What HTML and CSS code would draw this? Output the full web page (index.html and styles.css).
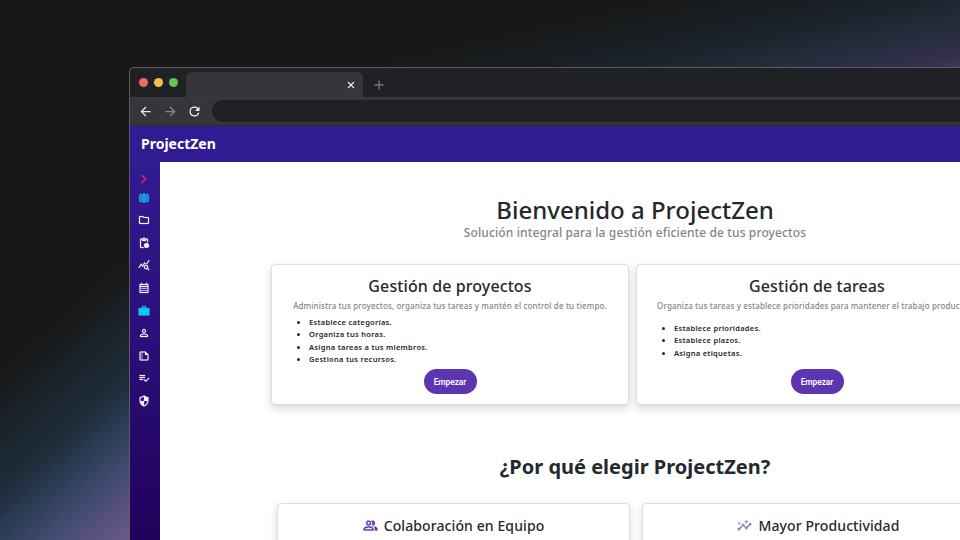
FILE: index.html
```html
<!DOCTYPE html>
<html lang="es">
<head>
<meta charset="utf-8">
<title>ProjectZen</title>
<link rel="stylesheet" href="styles.css">
</head>
<body>
<div class="window">
  <div class="tabs">
    <div class="lights"><i class="red"></i><i class="amber"></i><i class="green"></i></div>
    <div class="tab"><svg viewBox="0 0 8 8"><path d="M1 1l6 6M7 1L1 7"/></svg></div>
    <svg class="plus" viewBox="0 0 10 10"><path d="M5 .5v9M.5 5h9"/></svg>
  </div>
  <div class="toolbar">
    <svg class="nav" viewBox="0 0 24 24"><path d="M20 11H7.83l5.59-5.59L12 4l-8 8 8 8 1.41-1.41L7.83 13H20z"/></svg>
    <svg class="nav dim" viewBox="0 0 24 24"><path d="M12 4l-1.41 1.41L16.17 11H4v2h12.17l-5.58 5.59L12 20l8-8z"/></svg>
    <svg class="nav" viewBox="0 0 24 24"><path d="M17.65 6.35A7.96 7.96 0 0 0 12 4a8 8 0 1 0 7.73 10h-2.08A6 6 0 1 1 12 6c1.66 0 3.14.69 4.22 1.78L13 11h7V4z"/></svg>
    <div class="address"></div>
  </div>
  <header class="header">ProjectZen</header>
  <div class="body">
    <nav class="side">
      <svg class="chevron" viewBox="0 0 24 24"><path d="M7 4l8 8-8 8"/></svg>
      <svg class="cyan-line" viewBox="0 0 24 24"><path d="M12 2l3 3.3 4.7-1.2L20.700 9 22 12l-1.300 3-1 4.900L15 18.700 12 22l-3-3.300-4.700 1.200L3.300 15 2 12l1.300-3 1-4.900L9 5.300z"/><circle cx="12" cy="12" r="3.200"/><path d="M12 4v5M12 15v5M5 8l4.500 2.500M14.500 13.500L19 16M5 16l4.500-2.500M14.500 10.500L19 8"/></svg>
      <svg viewBox="0 0 24 24"><path d="M9.170 6l2 2H20v10H4V6h5.170M10 4H4c-1.100 0-1.990.9-1.990 2L2 18c0 1.100.9 2 2 2h16c1.100 0 2-.9 2-2V8c0-1.100-.9-2-2-2h-8l-2-2z"/></svg>
      <svg viewBox="0 0 24 24"><path d="M17 12a5 5 0 1 0 0 10 5 5 0 0 0 0-10zM18 3h-3.180C14.400 1.840 13.300 1 12 1s-2.400.84-2.820 2H6c-1.100 0-2 .9-2 2v15c0 1.100.9 2 2 2h6.110a6.740 6.740 0 0 1-1.420-2H6V5h2v3h8V5h2v5.080c.71.1 1.380.31 2 .6V5c0-1.100-.9-2-2-2zm-6 2a1 1 0 1 1 0-2 1 1 0 0 1 0 2z"/></svg>
      <svg viewBox="0 0 24 24"><path d="M19.880 18.470c.44-.7.7-1.510.7-2.390 0-2.490-2.010-4.500-4.500-4.500s-4.500 2.010-4.500 4.500 2.010 4.500 4.490 4.500c.88 0 1.700-.26 2.390-.7L21.580 23 23 21.580l-3.120-3.110zm-3.800.11a2.500 2.500 0 1 1 0-5 2.500 2.500 0 0 1 0 5zm-.36-8.500c-.74.020-1.450.18-2.100.45l-.55-.83-3.800 6.180-3.010-3.520-3.630 5.810L1 17l5-8 3 3.500L13 6l2.720 4.080zm2.590.5c-.64-.28-1.330-.45-2.050-.49L21.380 2 23 3.180l-4.690 7.400z"/></svg>
      <svg viewBox="0 0 24 24"><path d="M19 4h-1V2h-2v2H8V2H6v2H5c-1.110 0-1.990.9-1.990 2L3 20a2 2 0 0 0 2 2h14c1.100 0 2-.9 2-2V6c0-1.100-.9-2-2-2zm0 16H5V10h14v10zm0-12H5V6h14v2zM9 14H7v-2h2v2zm4 0h-2v-2h2v2zm4 0h-2v-2h2v2zm-8 4H7v-2h2v2zm4 0h-2v-2h2v2zm4 0h-2v-2h2v2z"/></svg>
      <svg class="cyan" viewBox="0 0 24 24"><path d="M21 6h-5V4c0-1.110-.89-2-2-2h-4c-1.110 0-2 .89-2 2v2H3c-1.110 0-1.990.89-1.990 2L1 19c0 1.110.89 2 2 2h18c1.110 0 2-.89 2-2V8c0-1.110-.89-2-2-2zm-7 0h-4V4h4v2z"/></svg>
      <svg viewBox="0 0 24 24"><path d="M12 5.900a2.100 2.100 0 1 1 0 4.200 2.100 2.100 0 0 1 0-4.200m0 9c2.970 0 6.100 1.460 6.100 2.100v1.100H5.900V17c0-.64 3.130-2.100 6.100-2.100M12 4C9.790 4 8 5.790 8 8s1.790 4 4 4 4-1.790 4-4-1.790-4-4-4zm0 9c-2.670 0-8 1.340-8 4v3h16v-3c0-2.660-5.330-4-8-4z"/></svg>
      <svg viewBox="0 0 24 24"><path d="M15 3H5a2 2 0 0 0-2 2v14c0 1.100.89 2 1.990 2H19a2 2 0 0 0 2-2V9l-6-6zM5 19V5h9v5h5v9H5zM9 8a1 1 0 1 1-2 0 1 1 0 0 1 2 0zm0 4a1 1 0 1 1-2 0 1 1 0 0 1 2 0zm0 4a1 1 0 1 1-2 0 1 1 0 0 1 2 0z"/></svg>
      <svg viewBox="0 0 24 24"><path d="M14 10H3v2h11v-2zm0-4H3v2h11V6zM3 16h7v-2H3v2zm12.500 4l-4.240-4.240 1.410-1.410 2.830 2.830 5.660-5.660 1.410 1.410z"/></svg>
      <svg viewBox="0 0 24 24"><path d="M12 1L3 5v6c0 5.550 3.840 10.740 9 12 5.160-1.260 9-6.450 9-12V5l-9-4zm0 10.990h7c-.53 4.120-3.280 7.790-7 8.940V12H5V6.300l7-3.110v8.800z"/></svg>
    </nav>
    <main class="main">
      <h1>Bienvenido a ProjectZen</h1>
      <p class="lead">Solución integral para la gestión eficiente de tus proyectos</p>
      <section class="cards">
        <article class="card">
          <h2>Gestión de proyectos</h2>
          <p>Administra tus proyectos, organiza tus tareas y mantén el control de tu tiempo.</p>
          <ul><li>Establece categorías.</li><li>Organiza tus horas.</li><li>Asigna tareas a tus miembros.</li><li>Gestiona tus recursos.</li></ul>
          <button>Empezar</button>
        </article>
        <article class="card wide">
          <h2>Gestión de tareas</h2>
          <p>Organiza tus tareas y establece prioridades para mantener el trabajo productivo.</p>
          <ul><li>Establece prioridades.</li><li>Establece plazos.</li><li>Asigna etiquetas.</li></ul>
          <button>Empezar</button>
        </article>
      </section>
      <h2 class="why">¿Por qué elegir ProjectZen?</h2>
      <section class="reasons">
        <article class="card reason">
          <svg viewBox="0 0 24 24"><path d="M16.670 13.130C18.040 14.060 19 15.320 19 17v3h4v-3c0-2.180-3.570-3.470-6.330-3.870zM15 12a4 4 0 1 0 0-8c-.47 0-.91.1-1.330.24a5.980 5.980 0 0 1 0 7.520c.42.14.86.24 1.330.24zM9 12a4 4 0 1 0 0-8 4 4 0 0 0 0 8zm0-6a2 2 0 1 1 0 4 2 2 0 0 1 0-4zm0 7c-2.670 0-8 1.340-8 4v3h16v-3c0-2.660-5.330-4-8-4zm6 5H3v-.990C3.200 16.290 6.300 15 9 15s5.800 1.290 6 2v1z"/></svg>
          <h3>Colaboración en Equipo</h3>
        </article>
        <article class="card reason second">
          <svg viewBox="0 0 24 24"><path d="M21 8c-1.450 0-2.260 1.440-1.930 2.510l-3.550 3.560c-.3-.09-.74-.09-1.040 0l-2.550-2.550C12.270 10.450 11.460 9 10 9c-1.450 0-2.270 1.440-1.930 2.520l-4.560 4.550C2.440 15.740 1 16.550 1 18c0 1.100.9 2 2 2 1.450 0 2.260-1.440 1.930-2.510l4.550-4.560c.3.090.74.090 1.040 0l2.550 2.550C12.730 16.550 13.540 18 15 18c1.450 0 2.270-1.440 1.930-2.520l3.560-3.550C21.560 12.260 23 11.450 23 10c0-1.100-.9-2-2-2z"/><path d="M15 9l.94-2.070L18 6l-2.060-.93L15 3l-.92 2.070L12 6l2.080.93zM3.500 11L4 9l2-.5L4 8l-.5-2L3 8l-2 .5L3 9z"/></svg>
          <h3>Mayor Productividad</h3>
        </article>
      </section>
    </main>
  </div>
</div>
</body>
</html>
```
FILE: styles.css
```css
* { box-sizing: border-box; }
body {
  margin: 0;
  width: 960px;
  height: 540px;
  overflow: hidden;
  padding: 67px 0 0 129px;
  font-family: "Noto Sans", "Open Sans", sans-serif;
  color: #24292e;
  background:
    linear-gradient(138deg, #171717 86px, #181a1b 115px, #1a2229 142px, #1e2d3a 192px, #2b3c56 222px, #414b6f 257px, #56507c 281px, #6b5b88 313px) 0 236px / 134px 304px no-repeat,
    linear-gradient(167.5deg, #171717 65px, #191b1c 94px, #1a2129 124px, #20283200 124px) 0 0 / 0 0 no-repeat,
    linear-gradient(167.5deg, #171717 66px, #191d20 100px, #1b222b 130px, #222b38 155px, #2b2e45 178px, #352f4a 192px, #41375a 204px) 320px 0 / 640px 68px no-repeat,
    #171717;
}
h1, h2, h3, p, ul { margin: 0; }
.window {
  width: 981px;
  height: 480px;
  border: 1px solid #5b5c5e;
  border-right: 0;
  border-radius: 5px 0 0 0;
  overflow: hidden;
  background: #202124;
}
.tabs { display: flex; height: 30px; border-bottom: 1px solid #3a3b3e; }
.lights { display: flex; gap: 6px; padding: 10px 8.500px 0 8.500px; }
.lights i { width: 9px; height: 9px; border-radius: 50%; }
.red { background: #ec6a5e; }
.amber { background: #f4bf4f; }
.green { background: #61c554; }
.tab {
  display: flex;
  align-items: center;
  justify-content: flex-end;
  width: 177px;
  height: 25px;
  margin-top: 4px;
  padding: 1px 8px 0 0;
  border-radius: 6px 6px 0 0;
  background: #35363a;
}
.tab svg { width: 8px; height: 8px; fill: none; stroke: #e8e8e8; stroke-width: 1.2; }
.plus { width: 10px; height: 10px; margin: 12px 0 0 11px; fill: none; stroke: #77787b; stroke-width: 1.3; }
.toolbar { display: flex; align-items: center; height: 28px; padding: 0 0 1px 8px; background: #35363a; border-bottom: 1px solid #292a30; }
.nav { width: 15px; height: 15px; margin-right: 9.500px; fill: #eee; }
.dim { fill: #87888b; }
.address { flex: 1; height: 22px; border-radius: 11px 0 0 11px; background: #202124; }
.header {
  height: 36px;
  padding-left: 11px;
  background: #311b92;
  color: #fff;
  font-size: 14px;
  line-height: 36px;
  font-weight: 700;
}
.body { display: flex; height: 390px; }
.side {
  display: flex;
  flex-direction: column;
  align-items: center;
  gap: 10.600px;
  width: 30px;
  padding: 10.500px 1.500px 0 0;
  background: linear-gradient(#311b92, #21005a);
}
.side svg { width: 12px; height: 12px; flex: none; fill: #f4efff; stroke: #f4efff; stroke-width: .5; }
.side .chevron { fill: none; stroke: #d52b5b; stroke-width: 3; margin-bottom: -3.500px; }
.side .cyan { fill: #12c4f3; stroke: #12c4f3; }
.side .cyan-line { fill: #1f70cf; stroke: #1eb1ed; stroke-width: 2; }
.main { width: 950px; background: #fff; text-align: center; padding-top: 33px; }
h1 { font-size: 24px; line-height: 30px; font-weight: 500; }
.lead { font-size: 12px; line-height: 16px; color: #858585; font-weight: 500; letter-spacing: .12px; }
.cards { display: flex; justify-content: center; gap: 7px; margin: 23px 2px 0 0; }
.card {
  display: flex;
  flex-direction: column;
  align-items: center;
  width: 358px;
  height: 141px;
  padding-left: 1px;
  border: 1px solid #dcdddf;
  border-radius: 4px;
  background: #fff;
  box-shadow: 0 4px 8px rgba(0, 0, 0, .15);
}
.wide { width: 362px; }
.card h2 { font-size: 16px; line-height: 21px; margin-top: 11px; font-weight: 500; letter-spacing: .1px; }
.card p { font-size: 8px; line-height: 12px; margin-top: 3px; color: #858585; font-weight: 500; white-space: nowrap; letter-spacing: .14px; }
.card ul { align-self: stretch; height: 50px; margin-top: 4px; padding-left: 36.500px; text-align: left; font-size: 7.500px; line-height: 12.300px; font-weight: 600; letter-spacing: .28px; }
.wide ul { height: 44px; margin-top: 10px; }
.card button {
  width: 53px;
  height: 25px;
  margin-top: 3px;
  padding: 0;
  border: 0;
  border-radius: 13px;
  background: #5e35b1;
  color: #fff;
  font: 600 8.300px Roboto, sans-serif;
}
.why { margin-top: 47px; font-size: 20px; line-height: 29px; font-weight: 700; }
.reasons { display: flex; justify-content: center; gap: 12px; margin: 22px 0 0 1px; }
.reason { flex-direction: row; align-items: flex-start; justify-content: center; gap: 6px; width: 353px; padding-top: 12px; }
.reason svg { width: 15px; height: 15px; margin-top: 2px; fill: #5e35b1; stroke: #5e35b1; stroke-width: .4; }
.second svg { fill: #9575cd; stroke: #9575cd; }
.reason h3 { font-size: 14px; line-height: 20px; font-weight: 500; letter-spacing: .1px; }
```
